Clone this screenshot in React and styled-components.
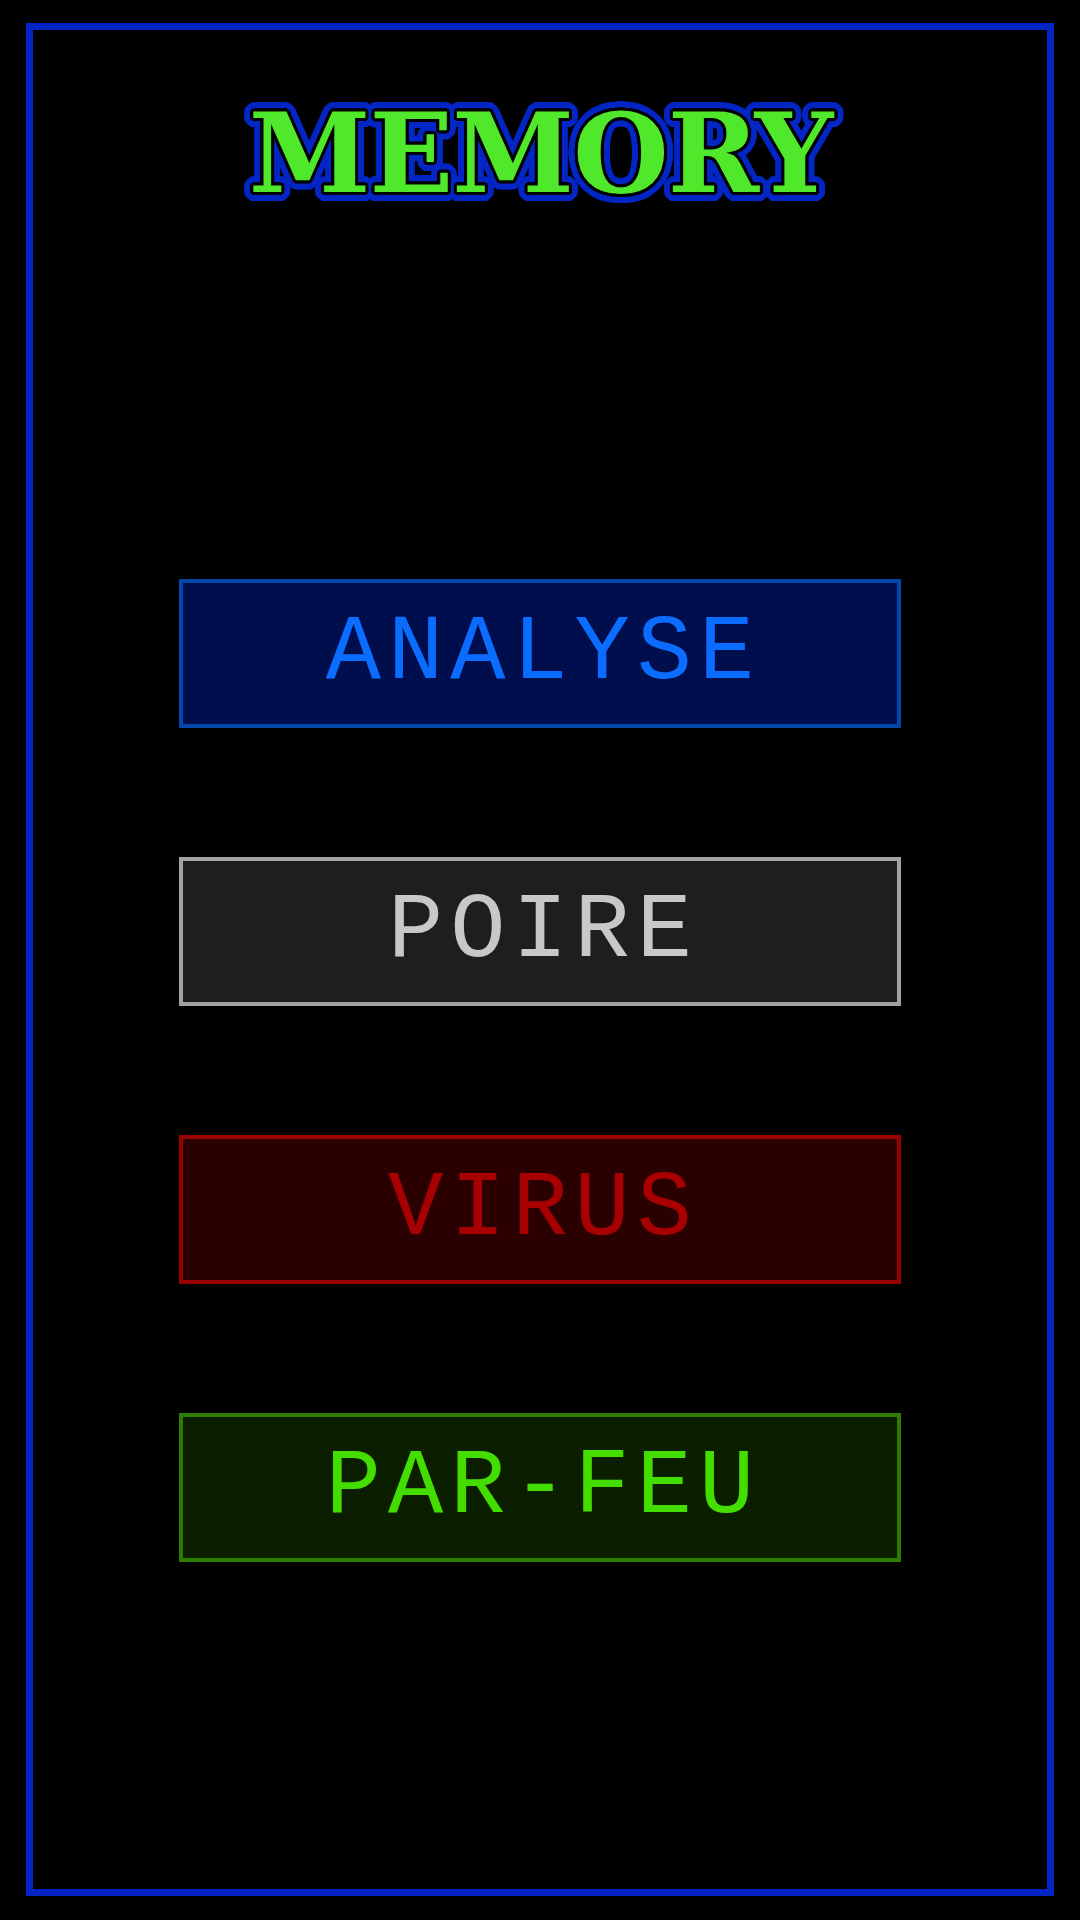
import React from "react";
import styled, { createGlobalStyle } from "styled-components";

const Global = createGlobalStyle`
  html, body { margin: 0; padding: 0; background: #000; }
  body { font-family: "DejaVu Sans", sans-serif; }
`;

const ring = (r, n, color) =>
  Array.from({ length: n }, (_, i) => {
    const a = (i / n) * Math.PI * 2;
    return `${(Math.cos(a) * r).toFixed(2)}px ${(Math.sin(a) * r).toFixed(2)}px 0 ${color}`;
  }).join(", ");

const outline = [
  ring(1.2, 12, "#000"),
  ring(2.4, 16, "#000"),
  ring(3, 20, "#000"),
  ring(9, 40, "#0326c4"),
  ring(7.5, 32, "#0326c4"),
  ring(6, 28, "#0326c4"),
  ring(4.5, 24, "#0326c4"),
].join(", ");

const Frame = styled.div`
  box-sizing: border-box;
  margin: 23px 26px 0;
  height: 1873px;
  border: 7px solid #0324c2;
  display: flex;
  flex-direction: column;
  align-items: center;
`;

const Title = styled.h1`
  margin: 69px 0 0;
  padding-left: 1px;
  font-family: "DejaVu Serif", serif;
  font-weight: bold;
  font-size: 110px;
  line-height: 1;
  letter-spacing: -1px;
  color: #50e82a;
  text-shadow: ${outline};
`;

const Menu = styled.nav`
  margin-top: 370px;
  display: flex;
  flex-direction: column;
  gap: 129px;
`;

const themes = {
  blue: { bg: "#000e4e", border: "#0347a8", fg: "#0a6dff" },
  gray: { bg: "#1e1e1e", border: "#a2a2a2", fg: "#c8c8c8" },
  red: { bg: "#2a0000", border: "#990000", fg: "#a80000" },
  green: { bg: "#0b1f00", border: "#2e7c00", fg: "#44dd00" },
};

const MenuButton = styled.button`
  box-sizing: border-box;
  width: 722px;
  height: 149px;
  border: 4px solid ${(p) => themes[p.$tone].border};
  background: ${(p) => themes[p.$tone].bg};
  color: ${(p) => themes[p.$tone].fg};
  display: flex;
  align-items: center;
  justify-content: center;
  padding: 0 0 0 7px;
  font-family: "Liberation Mono", monospace;
  font-size: 92px;
  letter-spacing: 7px;
  line-height: 1;
  cursor: pointer;
`;

const items = [
  { label: "ANALYSE", tone: "blue" },
  { label: "POIRE", tone: "gray" },
  { label: "VIRUS", tone: "red" },
  { label: "PAR-FEU", tone: "green" },
];

export default function App() {
  return (
    <>
      <Global />
      <Frame>
        <Title>MEMORY</Title>
        <Menu>
          {items.map((it) => (
            <MenuButton key={it.label} $tone={it.tone}>
              {it.label}
            </MenuButton>
          ))}
        </Menu>
      </Frame>
    </>
  );
}
